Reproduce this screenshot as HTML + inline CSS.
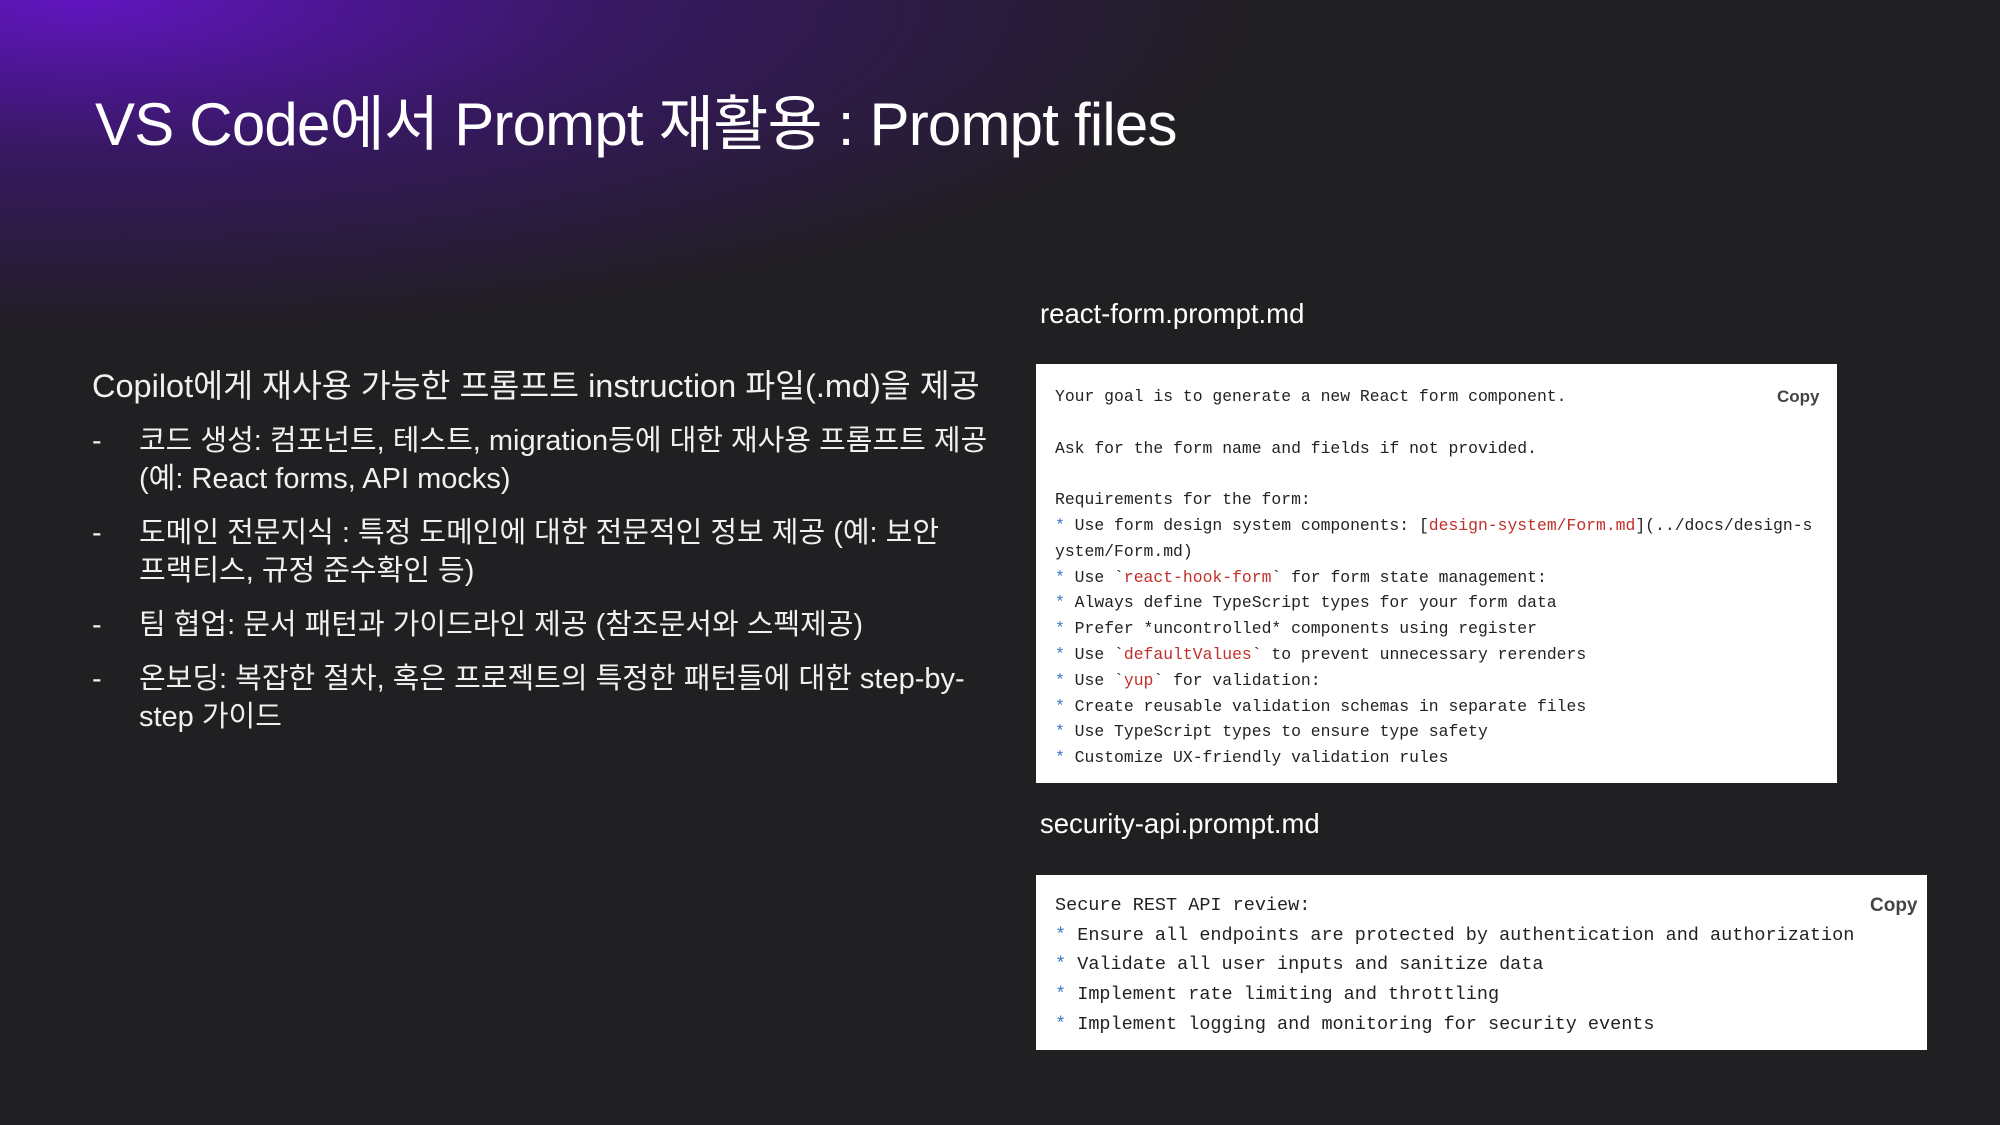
<!DOCTYPE html>
<html><head><meta charset="utf-8"><style>
*{margin:0;padding:0;box-sizing:border-box}
body{width:2000px;height:1125px;overflow:hidden;background:#201f21;position:relative;font-family:"Liberation Sans","Noto Sans CJK KR",sans-serif;color:#fff}
.bg{position:absolute;inset:0;background:radial-gradient(ellipse 1200px 340px at 80px 0px,rgba(100,20,200,0.95),rgba(70,20,140,0.6) 45%,rgba(32,31,33,0) 100%)}
.t{position:absolute;left:95px;top:76px;font-size:60px;letter-spacing:-0.8px;white-space:nowrap}
.lab{position:absolute;left:1040px;font-size:27.5px;white-space:nowrap}
.left{position:absolute;left:92px;top:360px;width:910px;color:#f0f0f0;word-break:keep-all}
.left .h{font-size:32.5px;white-space:nowrap;margin-bottom:15px}
.li{position:relative;padding-left:47px;line-height:38px;font-size:29px;margin-bottom:16px}
.li:before{content:"-";position:absolute;left:0}
.box{position:absolute;background:#fff;color:#222;font-family:"Liberation Mono",monospace;white-space:pre}
.b{color:#3b78c8}.r{color:#c0302a}
.copy{position:absolute;font-family:"Liberation Sans",sans-serif;color:#444;font-weight:bold}
</style></head><body>
<div class="bg"></div>
<div class="t">VS Code에서 Prompt 재활용 : Prompt files</div>
<div class="lab" style="top:298px">react-form.prompt.md</div>
<div class="lab" style="top:808px">security-api.prompt.md</div>
<div class="left">
<div class="h">Copilot에게 재사용 가능한 프롬프트 instruction 파일(.md)을 제공</div>
<div class="li">코드 생성: 컴포넌트, 테스트, migration등에 대한 재사용 프롬프트 제공 (예: React forms, API mocks)</div>
<div class="li">도메인 전문지식 : 특정 도메인에 대한 전문적인 정보 제공 (예: 보안 프랙티스, 규정 준수확인 등)</div>
<div class="li">팀 협업: 문서 패턴과 가이드라인 제공 (참조문서와 스펙제공)</div>
<div class="li">온보딩: 복잡한 절차, 혹은 프로젝트의 특정한 패턴들에 대한 step-by-step 가이드</div>
</div>
<div class="box" style="left:1036px;top:364px;width:801px;height:419px;font-size:16.4px;line-height:25.8px;padding:20px 0 0 19px">Your goal is to generate a new React form component.

Ask for the form name and fields if not provided.

Requirements for the form:
<span class="b">*</span> Use form design system components: [<span class="r">design-system/Form.md</span>](../docs/design-s
ystem/Form.md)
<span class="b">*</span> Use `<span class="r">react-hook-form</span>` for form state management:
<span class="b">*</span> Always define TypeScript types for your form data
<span class="b">*</span> Prefer *uncontrolled* components using register
<span class="b">*</span> Use `<span class="r">defaultValues</span>` to prevent unnecessary rerenders
<span class="b">*</span> Use `<span class="r">yup</span>` for validation:
<span class="b">*</span> Create reusable validation schemas in separate files
<span class="b">*</span> Use TypeScript types to ensure type safety
<span class="b">*</span> Customize UX-friendly validation rules<div class="copy" style="left:741px;top:20px;font-size:17px">Copy</div></div>
<div class="box" style="left:1036px;top:875px;width:891px;height:175px;font-size:18.5px;line-height:29.7px;padding:16px 0 0 19px">Secure REST API review:
<span class="b">*</span> Ensure all endpoints are protected by authentication and authorization
<span class="b">*</span> Validate all user inputs and sanitize data
<span class="b">*</span> Implement rate limiting and throttling
<span class="b">*</span> Implement logging and monitoring for security events<div class="copy" style="left:834px;top:16px;font-size:19px">Copy</div></div>
</body></html>
